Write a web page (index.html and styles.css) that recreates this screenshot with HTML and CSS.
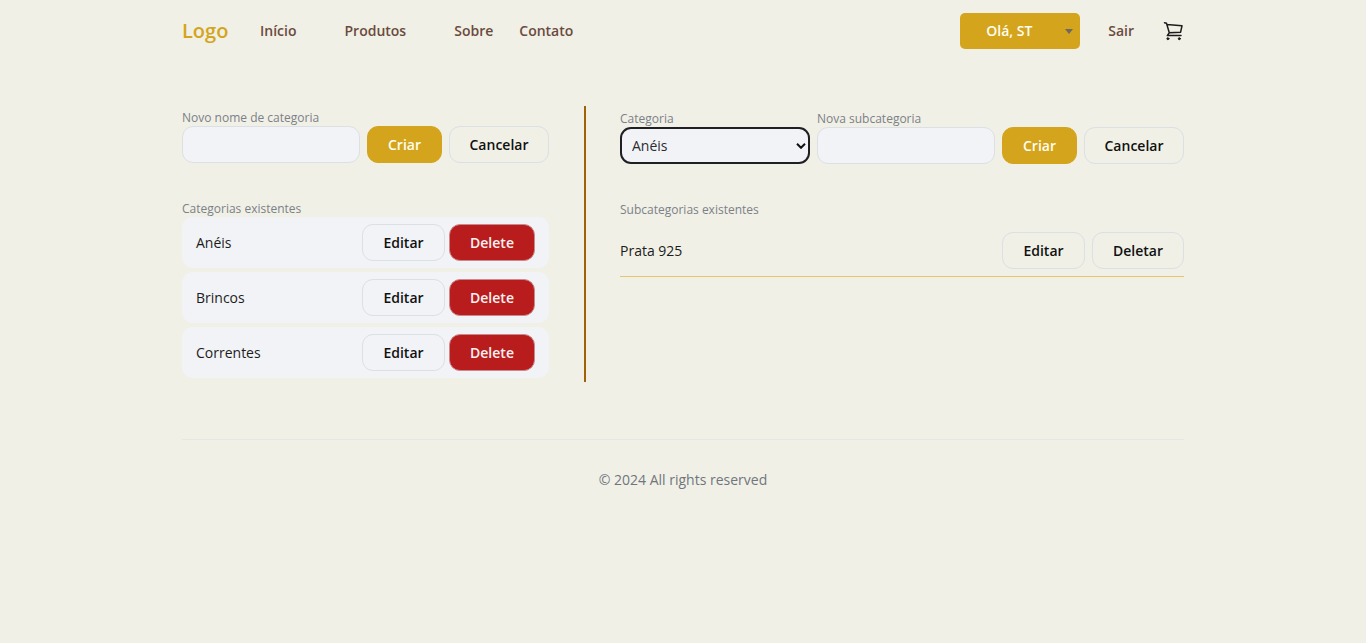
FILE: index.html
```html
<!DOCTYPE html>
<html lang="pt-BR">
<head>
<meta charset="utf-8">
<meta name="viewport" content="width=device-width, initial-scale=1">
<title>Categorias</title>
<link rel="stylesheet" href="styles.css">
</head>
<body>
<div class="container">
  <header class="header">
    <a class="logo" href="#">Logo</a>
    <nav class="nav">
      <a class="nav-link" href="#">Início</a>
      <a class="nav-link nav-link-wide" href="#">Produtos</a>
      <a class="nav-link" href="#">Sobre</a>
      <a class="nav-link" href="#">Contato</a>
    </nav>
    <div class="account">
      <div class="user-menu">
        <select class="user-select" aria-label="Conta"><option>Olá, ST</option></select>
        <svg class="user-caret" width="8" height="5" viewBox="0 0 8 5" aria-hidden="true"><path d="M0 0h8L4 5z" fill="#6b6a62"/></svg>
      </div>
      <a class="nav-link" href="#">Sair</a>
      <a class="cart" href="#" aria-label="Carrinho">
        <svg width="22" height="20" viewBox="0 0 22 20" fill="none" stroke="#1c1c1c" stroke-width="1.500" stroke-linecap="round" stroke-linejoin="round" aria-hidden="true">
          <path d="M2.500 1.700l2 .6L7.300 11.800 5.300 14.600H19M4.900 3.400L20 4.800l-1.400 6.400-11.300.6"/>
          <circle cx="5.900" cy="17.700" r="1" fill="#1c1c1c" stroke-width="1"/>
          <circle cx="17.300" cy="17.700" r="1" fill="#1c1c1c" stroke-width="1"/>
        </svg>
      </a>
    </div>
  </header>

  <main class="main">
    <section class="categories">
      <form class="form">
        <div class="field">
          <label class="label" for="category-name">Novo nome de categoria</label>
          <input class="input" id="category-name" type="text">
        </div>
        <button class="button button-create" type="button">Criar</button>
        <button class="button button-cancel" type="button">Cancelar</button>
      </form>
      <h2 class="label">Categorias existentes</h2>
      <ul class="list">
        <li class="item"><span class="item-name">Anéis</span><button class="button button-edit" type="button">Editar</button><button class="button button-delete" type="button">Delete</button></li>
        <li class="item"><span class="item-name">Brincos</span><button class="button button-edit" type="button">Editar</button><button class="button button-delete" type="button">Delete</button></li>
        <li class="item"><span class="item-name">Correntes</span><button class="button button-edit" type="button">Editar</button><button class="button button-delete" type="button">Delete</button></li>
      </ul>
    </section>

    <section class="subcategories">
      <form class="form">
        <div class="field field-select">
          <label class="label" for="category">Categoria</label>
          <div class="select-box">
            <select class="input select" id="category"><option>Anéis</option><option>Brincos</option><option>Correntes</option></select>
            <svg class="select-caret" width="10" height="6" viewBox="0 0 10 6" fill="none" stroke="#111" stroke-width="2" aria-hidden="true"><path d="M1 .8l4 4 4-4"/></svg>
          </div>
        </div>
        <div class="field">
          <label class="label" for="subcategory-name">Nova subcategoria</label>
          <input class="input" id="subcategory-name" type="text">
        </div>
        <button class="button button-create" type="button">Criar</button>
        <button class="button button-cancel" type="button">Cancelar</button>
      </form>
      <h2 class="label">Subcategorias existentes</h2>
      <ul class="sublist">
        <li class="subitem"><span class="item-name">Prata 925</span><button class="button button-edit" type="button">Editar</button><button class="button button-remove" type="button">Deletar</button></li>
      </ul>
    </section>
  </main>

  <footer class="footer">© 2024 All rights reserved</footer>
</div>
</body>
</html>
```
FILE: styles.css
```css
* {
  box-sizing: border-box;
}

body {
  margin: 0;
  background: #f0f0e6;
  color: #1c1c1c;
  font-family: "Segoe UI", "Open Sans", "Noto Sans", sans-serif;
  font-size: 14px;
  line-height: 20px;
}

.container {
  max-width: 1002px;
  margin: 0 auto;
}

.header {
  display: flex;
  align-items: center;
  padding: 13px 0;
}

.logo {
  width: 78px;
  color: #d4a51c;
  font-size: 20px;
  font-weight: 600;
  line-height: 28px;
  text-decoration: none;
}

.nav {
  display: flex;
  gap: 26px;
}

.nav-link {
  color: #6b4a3e;
  font-weight: 600;
  text-decoration: none;
}

.nav-link-wide {
  padding: 0 22px;
}

.account {
  display: flex;
  align-items: center;
  gap: 28px;
  margin-left: auto;
}

.user-menu {
  display: grid;
  align-items: center;
}

.user-select {
  grid-area: 1 / 1;
  width: 120px;
  height: 36px;
  padding: 0 26px;
  appearance: none;
  border: 0;
  border-radius: 5px;
  background: #d4a51c;
  color: #fffdf2;
  font: inherit;
  font-weight: 600;
}

.user-caret {
  grid-area: 1 / 1;
  justify-self: end;
  margin-right: 7px;
  pointer-events: none;
}

.cart {
  display: flex;
}

.main {
  display: grid;
  grid-template-columns: 404px 1fr;
  margin-top: 44px;
}

.categories {
  padding: 4px 35px 4px 0;
  border-right: 2px solid #a16207;
}

.subcategories {
  padding: 5px 0 4px 34px;
}

.form {
  display: flex;
  align-items: flex-end;
  gap: 7px;
  margin-bottom: 38px;
}

.field {
  display: flex;
  flex: 1;
  flex-direction: column;
  min-width: 0;
}

.field-select {
  flex: 0 0 190px;
}

.label {
  display: block;
  margin: 0;
  color: #7c8088;
  font-size: 12px;
  font-weight: 400;
  line-height: 16px;
}

.input {
  width: 100%;
  height: 37px;
  padding: 0 11px;
  border: 1px solid #dcdfe4;
  border-radius: 11px;
  background: #f2f3f6;
  color: #2b2b2f;
  font: inherit;
}

.select-box {
  display: grid;
  align-items: center;
}

.select {
  grid-area: 1 / 1;
  appearance: none;
  border: 2px solid #1f1f24;
  padding: 0 10px;
}

.select-caret {
  grid-area: 1 / 1;
  justify-self: end;
  margin-right: 4px;
  pointer-events: none;
}

.button {
  flex: none;
  height: 37px;
  padding: 0;
  border: 1px solid #dcdfe4;
  border-radius: 11px;
  background: transparent;
  color: #111;
  font: inherit;
  font-weight: 600;
}

.button-create {
  width: 75px;
  border-color: #d4a51c;
  background: #d4a51c;
  color: #fffdf2;
}

.button-cancel {
  width: 100px;
}

.button-edit {
  width: 83px;
}

.button-delete {
  width: 86px;
  border-color: #c98a8d;
  background: #b91c1c;
  color: #fdf2f2;
}

.button-remove {
  width: 92px;
}

.list,
.sublist {
  margin: 0;
  padding: 0;
  list-style: none;
}

.list {
  display: grid;
  gap: 4px;
}

.item,
.subitem {
  display: flex;
  align-items: center;
}

.item {
  gap: 4px;
  padding: 7px 14px;
  border-radius: 11px;
  background: #f2f3f6;
}

.item-name {
  flex: 1;
}

.sublist {
  padding-top: 14px;
}

.subitem {
  gap: 7px;
  padding-bottom: 7px;
  border-bottom: 1px solid #e3c670;
}

.footer {
  margin-top: 57px;
  padding: 30px 0;
  border-top: 1px solid #e5e7e3;
  color: #71757d;
  text-align: center;
}
```
